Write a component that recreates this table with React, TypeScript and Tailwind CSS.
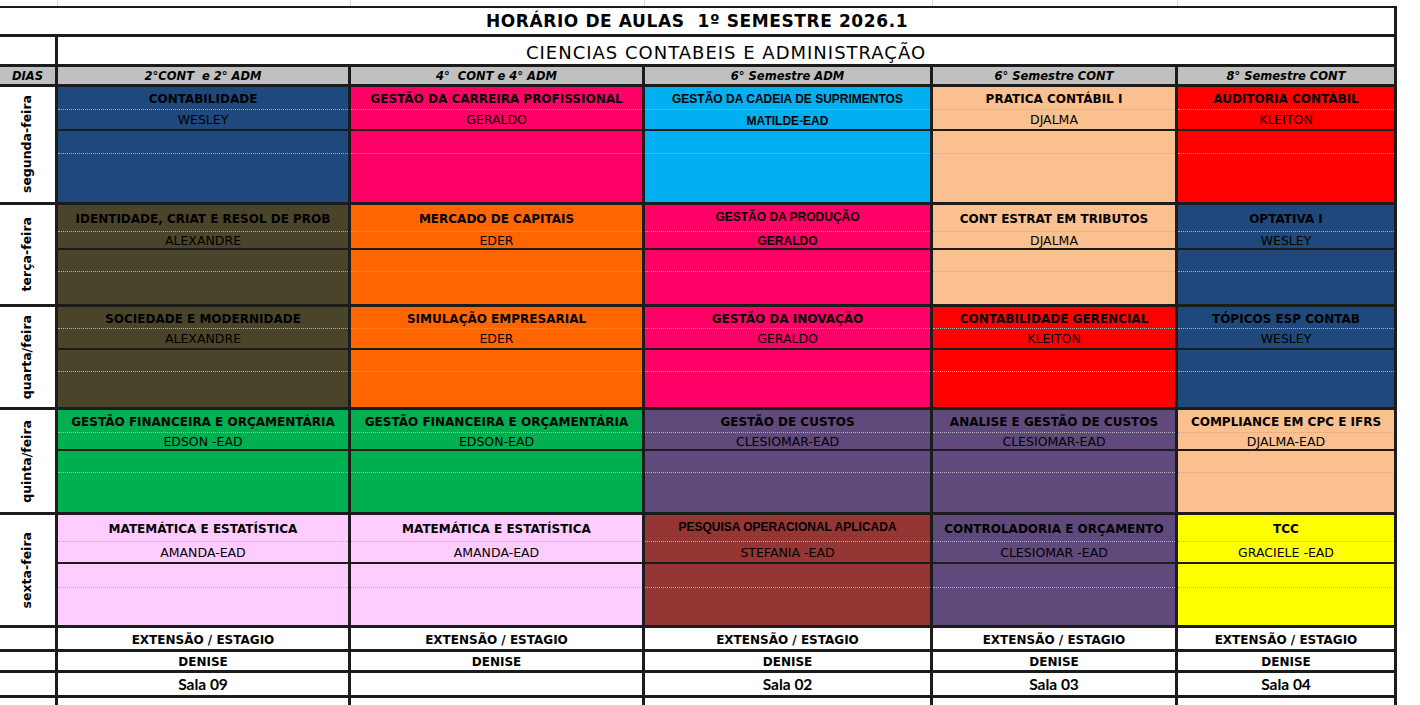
type Slot = {
  subject: string;
  teacher: string;
  bg: string;
  arialSubject?: boolean;
  arialTeacher?: boolean;
};

type Day = {
  label: string;
  rowH: string;
  subH: string;
  teachH: string;
  emptyH: string;
  slots: Slot[];
};

const BLUE = "bg-[#1f497d]";
const MAGENTA = "bg-[#ff0066]";
const CYAN = "bg-[#00b0f0]";
const PEACH = "bg-[#fac090]";
const RED = "bg-[#ff0000]";
const OLIVE = "bg-[#4a452a]";
const ORANGE = "bg-[#ff6600]";
const GREEN = "bg-[#00b050]";
const PURPLE = "bg-[#604a7b]";
const PINK = "bg-[#ffccff]";
const BROWN = "bg-[#963634]";
const YELLOW = "bg-[#ffff00]";

const columns = ["2°CONT  e 2° ADM", "4°  CONT e 4° ADM", "6° Semestre ADM", "6° Semestre CONT", "8° Semestre CONT"];

const days: Day[] = [
  {
    label: "segunda-feira",
    rowH: "h-[118px]",
    subH: "h-[23px]",
    teachH: "h-[21px]",
    emptyH: "h-[23px]",
    slots: [
      { subject: "CONTABILIDADE", teacher: "WESLEY", bg: BLUE },
      { subject: "GESTÃO DA CARREIRA PROFISSIONAL", teacher: "GERALDO", bg: MAGENTA },
      { subject: "GESTÃO DA CADEIA DE SUPRIMENTOS", teacher: "MATILDE-EAD", bg: CYAN, arialSubject: true, arialTeacher: true },
      { subject: "PRATICA CONTÁBIL I", teacher: "DJALMA", bg: PEACH },
      { subject: "AUDITORIA CONTÁBIL", teacher: "KLEITON", bg: RED },
    ],
  },
  {
    label: "terça-feira",
    rowH: "h-[102px]",
    subH: "h-[27px]",
    teachH: "h-[18px]",
    emptyH: "h-[22px]",
    slots: [
      { subject: "IDENTIDADE, CRIAT E RESOL DE PROB", teacher: "ALEXANDRE", bg: OLIVE },
      { subject: "MERCADO DE CAPITAIS", teacher: "EDER", bg: ORANGE },
      { subject: "GESTÃO DA PRODUÇÃO", teacher: "GERALDO", bg: MAGENTA, arialSubject: true, arialTeacher: true },
      { subject: "CONT ESTRAT EM TRIBUTOS", teacher: "DJALMA", bg: PEACH },
      { subject: "OPTATIVA I", teacher: "WESLEY", bg: BLUE },
    ],
  },
  {
    label: "quarta/feira",
    rowH: "h-[103px]",
    subH: "h-[22px]",
    teachH: "h-[21px]",
    emptyH: "h-[22px]",
    slots: [
      { subject: "SOCIEDADE E MODERNIDADE", teacher: "ALEXANDRE", bg: OLIVE },
      { subject: "SIMULAÇÃO EMPRESARIAL", teacher: "EDER", bg: ORANGE },
      { subject: "GESTÃO DA INOVAÇÃO", teacher: "GERALDO", bg: MAGENTA },
      { subject: "CONTABILIDADE GERENCIAL", teacher: "KLEITON", bg: RED },
      { subject: "TÓPICOS ESP CONTAB", teacher: "WESLEY", bg: BLUE },
    ],
  },
  {
    label: "quinta/feira",
    rowH: "h-[105px]",
    subH: "h-[23px]",
    teachH: "h-[18px]",
    emptyH: "h-[22px]",
    slots: [
      { subject: "GESTÃO FINANCEIRA E ORÇAMENTÁRIA", teacher: "EDSON -EAD", bg: GREEN },
      { subject: "GESTÃO FINANCEIRA E ORÇAMENTÁRIA", teacher: "EDSON-EAD", bg: GREEN },
      { subject: "GESTÃO DE CUSTOS", teacher: "CLESIOMAR-EAD", bg: PURPLE },
      { subject: "ANALISE E GESTÃO DE CUSTOS", teacher: "CLESIOMAR-EAD", bg: PURPLE },
      { subject: "COMPLIANCE EM CPC E IFRS", teacher: "DJALMA-EAD", bg: PEACH },
    ],
  },
  {
    label: "sexta-feira",
    rowH: "h-[113px]",
    subH: "h-[27px]",
    teachH: "h-[22px]",
    emptyH: "h-[24px]",
    slots: [
      { subject: "MATEMÁTICA E ESTATÍSTICA", teacher: "AMANDA-EAD", bg: PINK },
      { subject: "MATEMÁTICA E ESTATÍSTICA", teacher: "AMANDA-EAD", bg: PINK },
      { subject: "PESQUISA OPERACIONAL APLICADA", teacher: "STEFANIA -EAD", bg: BROWN, arialSubject: true },
      { subject: "CONTROLADORIA E ORÇAMENTO", teacher: "CLESIOMAR -EAD", bg: PURPLE },
      { subject: "TCC", teacher: "GRACIELE -EAD", bg: YELLOW },
    ],
  },
];

const salas = ["Sala 09", "", "Sala 02", "Sala 03", "Sala 04"];

const comic = "font-['DejaVu_Sans',sans-serif]";
const arial = "font-['Liberation_Sans',Arial,sans-serif]";
const cellBorder = "border-r-[3px] border-b-[3px] border-[#1c1c1c]";

function SlotCell({ slot, day }: { slot: Slot; day: Day }) {
  return (
    <div className={`${cellBorder} ${slot.bg} ${day.rowH} flex flex-col text-black`}>
      <div
        className={`${day.subH} flex ${slot.arialSubject ? "items-start pt-[3px]" : "items-center pt-[2px]"} justify-center border-b border-dotted border-[#b0b0b0] whitespace-nowrap ${
          slot.arialSubject ? `${arial} text-[12px] font-bold` : `${comic} text-[12px] font-bold`
        }`}
      >
        {slot.subject}
      </div>
      <div
        className={`${day.teachH} flex items-center justify-center pt-[2px] border-b-2 border-[#1c1c1c] whitespace-nowrap ${
          slot.arialTeacher ? `${arial} text-[12px] font-bold` : `${comic} text-[12.5px]`
        }`}
      >
        {slot.teacher}
      </div>
      <div className={`${day.emptyH} border-b border-dotted border-[#b0b0b0]`} />
      <div className="flex-1" />
    </div>
  );
}

export default function App() {
  return (
    <div className="w-[1420px] h-[705px] overflow-hidden bg-white">
      <div className="w-[1397px] grid grid-cols-[58px_293px_294px_288px_245px_219px]">
        {/* faint spreadsheet gridlines above the sheet */}
        {[0, 1, 2, 3, 4, 5].map((i) => (
          <div key={`top-${i}`} className={`h-[6px] ${i < 5 ? "border-r border-[#d9d9d9]" : ""}`} />
        ))}

        {/* title */}
        <div className="col-span-6 h-[31px] pt-[2px] border-t-2 border-r-[3px] border-b-[3px] border-[#1c1c1c] flex items-center justify-center">
          <span className={`${comic} text-[17px] font-bold tracking-[0.6px] text-black whitespace-pre`}>
            HORÁRIO DE AULAS  1º SEMESTRE 2026.1
          </span>
        </div>

        {/* course */}
        <div className={`${cellBorder} h-[30px]`} />
        <div className={`col-span-5 ${cellBorder} h-[30px] pt-[3px] flex items-center justify-center`}>
          <span className={`${comic} text-[18px] tracking-[1px] text-black`}>CIENCIAS CONTABEIS E ADMINISTRAÇÃO</span>
        </div>

        {/* header row */}
        <div className={`${cellBorder} h-[20px] pt-[2px] bg-[#c0c0c0] flex items-center justify-center`}>
          <span className={`${comic} text-[11.5px] font-bold italic text-black`}>DIAS</span>
        </div>
        {columns.map((c) => (
          <div key={c} className={`${cellBorder} h-[20px] pt-[2px] bg-[#c0c0c0] flex items-center justify-center`}>
            <span className={`${comic} text-[11.5px] font-bold italic text-black whitespace-pre`}>{c}</span>
          </div>
        ))}

        {/* days */}
        {days.map((day) => (
          <div key={day.label} className="contents">
            <div className={`${cellBorder} ${day.rowH} flex items-center justify-center`}>
              <span className={`${comic} text-[12.5px] font-bold text-black [writing-mode:vertical-rl] rotate-180`}>
                {day.label}
              </span>
            </div>
            {day.slots.map((slot, i) => (
              <SlotCell key={i} slot={slot} day={day} />
            ))}
          </div>
        ))}

        {/* extension rows */}
        <div className={`${cellBorder} h-[24px]`} />
        {salas.map((_, i) => (
          <div key={`ext-${i}`} className={`${cellBorder} h-[24px] pt-[3px] flex items-center justify-center`}>
            <span className={`${comic} text-[12px] font-bold text-black`}>EXTENSÃO / ESTAGIO</span>
          </div>
        ))}

        <div className={`${cellBorder} h-[21px]`} />
        {salas.map((_, i) => (
          <div key={`den-${i}`} className={`${cellBorder} h-[21px] pt-[2px] flex items-center justify-center`}>
            <span className={`${comic} text-[12px] font-bold text-black`}>DENISE</span>
          </div>
        ))}

        <div className={`${cellBorder} h-[25px]`} />
        {salas.map((s, i) => (
          <div key={`sala-${i}`} className={`${cellBorder} h-[25px] pt-[2px] flex items-center justify-center`}>
            <span className="font-['Lato',sans-serif] text-[15.5px] font-bold text-black">{s}</span>
          </div>
        ))}

        {[0, 1, 2, 3, 4, 5].map((i) => (
          <div key={`end-${i}`} className="h-[10px] border-r-[3px] border-[#1c1c1c]" />
        ))}
      </div>
    </div>
  );
}
